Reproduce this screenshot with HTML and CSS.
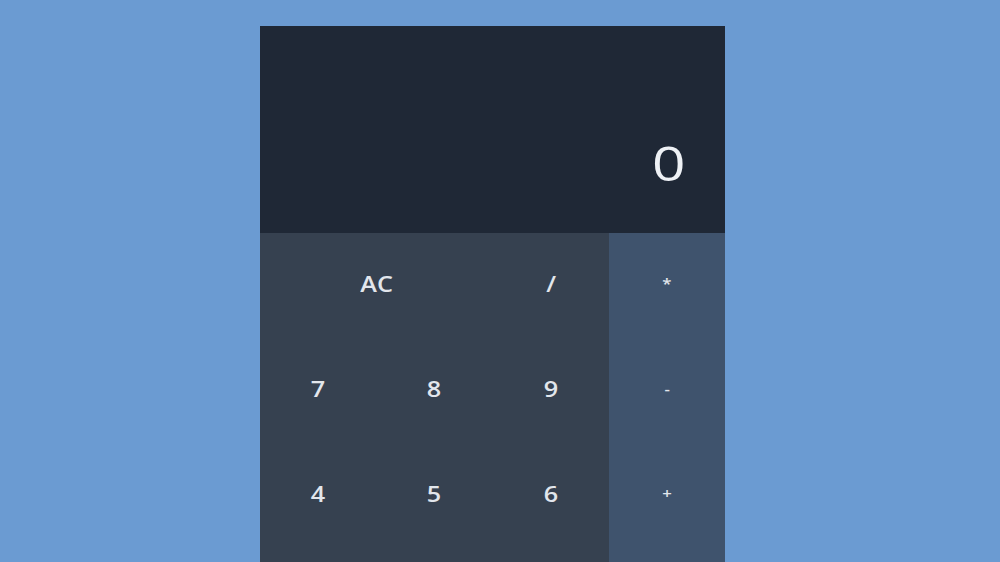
FILE: index.html
```html
<!DOCTYPE html>
<html lang="en">
<head>
<meta charset="utf-8">
<title>Calculator</title>
<link rel="stylesheet" href="styles.css">
</head>
<body>
<main class="page">
  <div class="calculator">
    <div class="display"><span class="value">0</span></div>
    <div class="keys">
      <button class="key span-2"><span class="label">AC</span></button>
      <button class="key"><span class="label">/</span></button>
      <button class="key op"><span class="label">*</span></button>
      <button class="key"><span class="label">7</span></button>
      <button class="key"><span class="label">8</span></button>
      <button class="key"><span class="label">9</span></button>
      <button class="key op"><span class="label">-</span></button>
      <button class="key"><span class="label">4</span></button>
      <button class="key"><span class="label">5</span></button>
      <button class="key"><span class="label">6</span></button>
      <button class="key op"><span class="label">+</span></button>
      <button class="key"><span class="label">1</span></button>
      <button class="key"><span class="label">2</span></button>
      <button class="key"><span class="label">3</span></button>
      <button class="key op"><span class="label">=</span></button>
    </div>
  </div>
</main>
</body>
</html>
```
FILE: styles.css
```css
html, body {
  margin: 0;
  height: 100%;
  overflow: hidden;
}
body {
  background: #6b9bd2;
  font-family: "Open Sans", "Noto Sans", sans-serif;
}
.page {
  display: flex;
  justify-content: center;
  padding: 26px 15px 0 0;
}
.calculator {
  width: 465px;
  display: flex;
  flex-direction: column;
}
.display {
  height: 207px;
  background: #1f2836;
  display: flex;
  align-items: flex-end;
  justify-content: flex-end;
  padding: 0 40px 46px 0;
  box-sizing: border-box;
}
.value {
  display: inline-block;
  color: #eef1f5;
  font-size: 48px;
  line-height: 1;
  transform: scaleX(1.22);
  transform-origin: right center;
}
.keys {
  display: grid;
  grid-template-columns: repeat(4, 1fr);
  grid-auto-rows: 105px;
}
.key {
  border: 0;
  margin: 0;
  padding: 0 0 4px;
  background: #364150;
  color: #e2e6ec;
  font-family: inherit;
  font-size: 21px;
  font-weight: 600;
}
.label {
  display: inline-block;
  transform: scaleX(1.2);
}
.span-2 {
  grid-column: span 2;
}
.op {
  background: #3f536d;
  font-size: 14px;
}
```
